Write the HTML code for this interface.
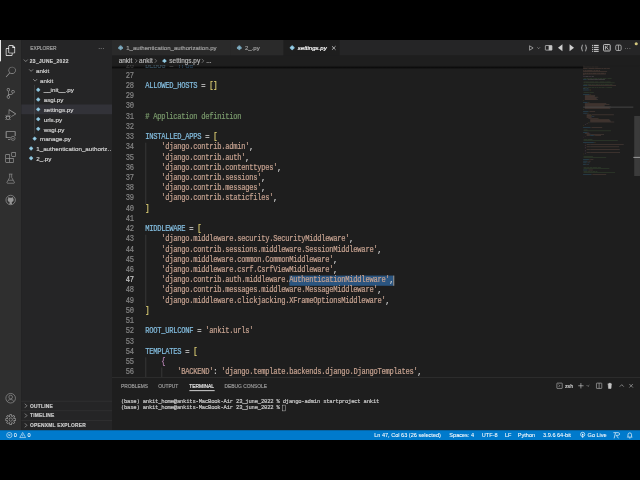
<!DOCTYPE html>
<html><head><meta charset="utf-8">
<style>

*{margin:0;padding:0;box-sizing:border-box}
html,body{width:640px;height:480px;background:#000;overflow:hidden}
#w{filter:blur(0.9px);-webkit-text-stroke-width:0.4px;position:absolute;left:0;top:40px;width:1440px;height:900px;transform:scale(0.444444);transform-origin:0 0;background:#1e1e1e;font-family:"Liberation Sans",sans-serif;overflow:hidden}
.a{position:absolute}
#act{left:0;top:0;width:48px;height:878px;background:#2f2f2f}
#side{left:48px;top:0;width:204px;height:878px;background:#252526}
#tabs{left:252px;top:0;width:1188px;height:35px;background:#252526}
.tab{position:absolute;top:0;height:35px;background:#2a2a2a;color:#a0a0a0;font-size:13.6px;line-height:36px;white-space:nowrap}
.tab.act{background:#1e1e1e;color:#ffffff;font-style:italic}.tab svg{opacity:.8}.tab.act svg{opacity:1}
#bc{left:252px;top:35px;width:1188px;height:22px;background:#1e1e1e;color:#b8b8b8;font-size:14.5px;line-height:22px;white-space:nowrap}
#code{left:252px;top:57px;width:1188px;height:702px;overflow:hidden;background:#1e1e1e}
.ln{position:absolute;left:0;width:49px;text-align:right;color:#858585;font-family:"Liberation Mono",monospace;font-size:16px;letter-spacing:-0.6px;height:23px;line-height:23px;transform:scaleY(1.15);transform-origin:0 15.8px}
.cl{position:absolute;left:75px;white-space:pre;color:#d4d4d4;font-family:"Liberation Mono",monospace;font-size:16px;letter-spacing:-0.6px;height:23px;line-height:23px;transform:scaleY(1.15);transform-origin:0 15.8px}
.v{color:#84bee0}.s{color:#c6a290}.c{color:#7a9a6c}.y{color:#dccd74}.p{color:#bb86b8}.k{color:#569cd6}
#panel{left:252px;top:759px;width:1188px;height:119px;background:#1e1e1e;border-top:1px solid #414141}
.pt{position:absolute;top:1px;height:35px;line-height:35px;font-size:11px;color:#9a9a9a;letter-spacing:0px}
.term{position:absolute;left:20px;white-space:pre;color:#cccccc;font-family:"Liberation Mono",monospace;font-size:12.5px;letter-spacing:-0.5px;line-height:14px;transform:scaleY(1.12);transform-origin:0 10.3px}
#status{left:0;top:878px;width:1440px;height:22px;background:#007acc;color:#fff;font-size:12.5px;line-height:22px;white-space:nowrap;-webkit-text-stroke-width:0.15px}
.row{position:absolute;left:0;width:204px;height:22px;line-height:24.5px;font-size:14px;color:#d2d2d2;white-space:nowrap}
.sec{position:absolute;left:0;width:204px;height:22px;line-height:22px;font-size:11px;font-weight:bold;color:#cccccc;border-top:1px solid #3c3c3c}
svg{position:absolute;overflow:visible}

</style></head><body>
<div id="w">
<div id="act" class="a"><div class="a" style="left:0;top:0;width:2px;height:48px;background:#ffffff"></div><svg class="a" style="left:12.0px;top:12.0px" width="24" height="24" viewBox="0 0 24 24" fill="#ffffff" fill-rule="evenodd"><path d="M17.5 0h-9L7 1.5V6H2.5L1 7.5v15.07L2.5 24h12.07L16 22.57V18h4.7l1.3-1.43V4.5L17.5 0zm0 2.12l2.38 2.38H17.5V2.12zm-3 20.38h-12v-15H7v9.07L8.5 18h6v4.5zm6-6h-12v-15H16V6h4.5v10.5z"/></svg><svg class="a" style="left:12.0px;top:60.0px" width="24" height="24" viewBox="0 0 24 24" fill="#969696" fill-rule="evenodd"><path d="M15.25 0a8.25 8.25 0 0 0-6.18 13.72L1 22.88l1.12 1 8.05-9.12A8.251 8.251 0 1 0 15.25.01V0zm0 15a6.75 6.75 0 1 1 0-13.5 6.75 6.75 0 0 1 0 13.5z"/></svg><svg class="a" style="left:12.0px;top:108.0px" width="24" height="24" viewBox="0 0 24 24" fill="#969696" fill-rule="evenodd"><path d="M21.007 8.222A3.738 3.738 0 0 0 15.045 5.2a3.737 3.737 0 0 0 1.156 6.583 2.988 2.988 0 0 1-2.668 1.67h-2.99a4.456 4.456 0 0 0-2.989 1.165V7.4a3.737 3.737 0 1 0-1.494 0v9.117a3.776 3.776 0 1 0 1.816.099 2.99 2.99 0 0 1 2.668-1.667h2.99a4.484 4.484 0 0 0 4.223-3.039 3.736 3.736 0 0 0 3.25-3.687zM4.565 3.738a2.242 2.242 0 1 1 4.484 0 2.242 2.242 0 0 1-4.484 0zm4.484 16.441a2.242 2.242 0 1 1-4.484 0 2.242 2.242 0 0 1 4.484 0zm8.221-9.715a2.242 2.242 0 1 1 0-4.485 2.242 2.242 0 0 1 0 4.485z"/></svg><svg class="a" style="left:12.0px;top:156.0px" width="24" height="24" viewBox="0 0 24 24" fill="#969696" fill-rule="evenodd"><path d="M10.94 13.5l-1.32 1.32a3.73 3.73 0 0 0-7.24 0L1.06 13.5 0 14.560l1.72 1.72-.22.22V18H0v1.5h1.5v.08c.077.489.214.966.41 1.42L0 22.94 1.06 24l1.65-1.65A4.308 4.308 0 0 0 6 24a4.310 4.310 0 0 0 3.29-1.65L10.94 24 12 22.94 10.09 21c.198-.464.336-.951.41-1.45v-.1H12V18h-1.5v-1.5l-.22-.22L12 14.56l-1.06-1.06zM6 13.5a2.25 2.25 0 0 1 2.25 2.25h-4.5A2.25 2.25 0 0 1 6 13.5zm3 6a3.33 3.33 0 0 1-3 3 3.33 3.33 0 0 1-3-3v-2.25h6v2.25zm14.76-9.9v1.26L13.5 17.37V15.6l8.5-5.37L9 2v9.46a5.07 5.07 0 0 0-1.5-.72V.63L8.64 0l15.12 9.6z"/></svg><svg class="a" style="left:12.0px;top:204.0px" width="24" height="24" viewBox="0 0 24 24" fill="#969696" fill-rule="evenodd"><path d="M1.5 1.5h21l.75.75V12H21V3H3v12h9v1.5H1.5l-.75-.75V2.25zM6 19.5h5.25V21H6z"/><circle cx="17.25" cy="17.25" r="4.6" fill="none" stroke="#969696" stroke-width="1.5"/><path d="M15.2 18.6l2-2 2 2" fill="none" stroke="#969696" stroke-width="1.3"/></svg><svg class="a" style="left:12.0px;top:252.0px" width="24" height="24" viewBox="0 0 24 24" fill="#969696" fill-rule="evenodd"><path d="M13.5 1.5L15 0h7.5L24 1.5V9l-1.5 1.5H15L13.5 9V1.5zm1.5 0V9h7.5V1.5H15zM0 15V6l1.5-1.5H9L10.5 6v7.5H18l1.5 1.5v7.5L18 24H1.5L0 22.5V15zm9-1.5V6H1.5v7.5H9zM9 15H1.5v7.5H9V15zm1.5 7.5H18V15h-7.5v7.5z"/></svg><svg class="a" style="left:12.0px;top:300.0px" width="24" height="24" viewBox="0 0 24 24" fill="#969696" fill-rule="evenodd"><path d="M8 1.75h8M9.75 1.75v7.5L3.6 20.4c-.5 1 .2 1.85 1.1 1.85h14.6c.9 0 1.6-.85 1.1-1.85L14.25 9.25v-7.5M6.5 15.5h11" fill="none" stroke="#969696" stroke-width="1.5" stroke-linejoin="round"/></svg><svg class="a" style="left:12.0px;top:348.0px" width="24" height="24" viewBox="0 0 24 24" fill="#969696" fill-rule="evenodd"><circle cx="12" cy="12" r="10.6" fill="none" stroke="#969696" stroke-width="1.6"/><path d="M9.3 21.5v-3.2c0-.8.2-1.3.6-1.7-2.4-.3-4.5-1.3-4.5-5 0-1.1.4-2 1.1-2.7-.1-.3-.4-1.4.1-2.8 0 0 .9-.3 2.9 1.1.85-.25 1.7-.35 2.55-.35s1.7.1 2.55.35c2-1.4 2.9-1.1 2.9-1.1.5 1.4.2 2.5.1 2.8.7.7 1.1 1.6 1.1 2.7 0 3.7-2.1 4.7-4.5 5 .4.4.6 1 .6 1.9v3z" fill="#969696"/></svg><svg class="a" style="left:12.0px;top:794.0px" width="24" height="24" viewBox="0 0 24 24" fill="#969696" fill-rule="evenodd"><circle cx="12" cy="12" r="10.8" fill="none" stroke="#969696" stroke-width="1.5"/><circle cx="12" cy="9.3" r="4.1" fill="none" stroke="#969696" stroke-width="1.5"/><path d="M4.8 19.6c1.4-3.2 4-4.6 7.2-4.6s5.8 1.4 7.2 4.6" fill="none" stroke="#969696" stroke-width="1.5"/></svg><svg class="a" style="left:12.0px;top:842.0px" width="24" height="24" viewBox="0 0 24 24" fill="#969696" fill-rule="evenodd"><path d="M19.85 8.75l4.15.83v4.84l-4.15.83 2.35 3.52-3.42 3.42-3.52-2.35-.83 4.16H9.58l-.83-4.15-3.52 2.35-3.42-3.42 2.35-3.52L0 14.42V9.58l4.15-.83L1.8 5.23 5.23 1.8l3.52 2.35L9.58 0h4.84l.83 4.15 3.52-2.35 3.42 3.42-2.35 3.53zm-1.57 5.07l4.22-.84v-1.96l-4.22-.84-.28-.72-.27-.71 2.38-3.58-1.39-1.39-3.58 2.38-.71-.27-.72-.28L12.98 1.5h-1.96l-.84 4.22-.72.28-.71.27-3.58-2.38-1.39 1.39 2.38 3.58-.27.71-.28.72-4.22.84v1.96l4.22.84.28.72.27.71-2.38 3.58 1.39 1.39 3.58-2.38.71.27.72.28.84 4.22h1.96l.84-4.22.72-.28.71-.27 3.58 2.38 1.39-1.39-2.38-3.58.27-.71.28-.72zM12 15a3 3 0 1 0 0-6 3 3 0 0 0 0 6zm0 1.5a4.5 4.5 0 1 0 0-9 4.5 4.5 0 0 0 0 9z"/></svg></div>
<div id="side" class="a"><div class="a" style="left:20px;top:1.5px;height:35px;line-height:35px;font-size:11px;color:#a0a0a0;letter-spacing:-0.1px">EXPLORER</div><div class="a" style="left:173px;top:1px;height:35px;line-height:35px;font-size:13px;color:#8a8a8a;letter-spacing:0.5px">&middot;&middot;&middot;</div><svg class="a" style="left:2px;top:38px" width="16" height="16" viewBox="0 0 16 16" fill="none" stroke="#c5c5c5" stroke-width="1.3"><path d="M3.5 6l4.5 4.5L12.5 6"/></svg><div class="row" style="top:35px;left:19px;font-size:11px;font-weight:bold;color:#cccccc;letter-spacing:0.8px">23_JUNE_2022</div><svg class="a" style="left:13.5px;top:60px" width="16" height="16" viewBox="0 0 16 16" fill="none" stroke="#c5c5c5" stroke-width="1.3"><path d="M3.5 6l4.5 4.5L12.5 6"/></svg><div class="row" style="top:57px;left:33px">ankit</div><svg class="a" style="left:22.5px;top:82px" width="16" height="16" viewBox="0 0 16 16" fill="none" stroke="#c5c5c5" stroke-width="1.3"><path d="M3.5 6l4.5 4.5L12.5 6"/></svg><div class="row" style="top:79px;left:42px">ankit</div><svg class="a" style="left:30.9px;top:105.0px" width="14.0" height="14.0" viewBox="0 0 14 14"><path d="M7 2.2Q7.4 2.2 7.8 2.6L11.4 6.2Q11.8 7 11.4 7.8L7.8 11.4Q7 11.8 6.2 11.4L2.6 7.8Q2.2 7 2.6 6.2L6.2 2.6Q6.6 2.2 7 2.2z" fill="#86bfd9"/><path d="M7 5.2L8.8 7 7 8.8 5.2 7z" fill="#d2ecf5" opacity="0.55"/></svg><div class="row" style="top:101px;left:50.3px">__init__.py</div><svg class="a" style="left:30.9px;top:127.0px" width="14.0" height="14.0" viewBox="0 0 14 14"><path d="M7 2.2Q7.4 2.2 7.8 2.6L11.4 6.2Q11.8 7 11.4 7.8L7.8 11.4Q7 11.8 6.2 11.4L2.6 7.8Q2.2 7 2.6 6.2L6.2 2.6Q6.6 2.2 7 2.2z" fill="#86bfd9"/><path d="M7 5.2L8.8 7 7 8.8 5.2 7z" fill="#d2ecf5" opacity="0.55"/></svg><div class="row" style="top:123px;left:50.3px">asgi.py</div><div class="a" style="left:0;top:145px;width:204px;height:22px;background:#323238"></div><svg class="a" style="left:30.9px;top:149.0px" width="14.0" height="14.0" viewBox="0 0 14 14"><path d="M7 2.2Q7.4 2.2 7.8 2.6L11.4 6.2Q11.8 7 11.4 7.8L7.8 11.4Q7 11.8 6.2 11.4L2.6 7.8Q2.2 7 2.6 6.2L6.2 2.6Q6.6 2.2 7 2.2z" fill="#86bfd9"/><path d="M7 5.2L8.8 7 7 8.8 5.2 7z" fill="#d2ecf5" opacity="0.55"/></svg><div class="row" style="top:145px;left:50.3px">settings.py</div><svg class="a" style="left:30.9px;top:171.0px" width="14.0" height="14.0" viewBox="0 0 14 14"><path d="M7 2.2Q7.4 2.2 7.8 2.6L11.4 6.2Q11.8 7 11.4 7.8L7.8 11.4Q7 11.8 6.2 11.4L2.6 7.8Q2.2 7 2.6 6.2L6.2 2.6Q6.6 2.2 7 2.2z" fill="#86bfd9"/><path d="M7 5.2L8.8 7 7 8.8 5.2 7z" fill="#d2ecf5" opacity="0.55"/></svg><div class="row" style="top:167px;left:50.3px">urls.py</div><svg class="a" style="left:30.9px;top:193.0px" width="14.0" height="14.0" viewBox="0 0 14 14"><path d="M7 2.2Q7.4 2.2 7.8 2.6L11.4 6.2Q11.8 7 11.4 7.8L7.8 11.4Q7 11.8 6.2 11.4L2.6 7.8Q2.2 7 2.6 6.2L6.2 2.6Q6.6 2.2 7 2.2z" fill="#86bfd9"/><path d="M7 5.2L8.8 7 7 8.8 5.2 7z" fill="#d2ecf5" opacity="0.55"/></svg><div class="row" style="top:189px;left:50.3px">wsgi.py</div><svg class="a" style="left:22.9px;top:215.0px" width="14.0" height="14.0" viewBox="0 0 14 14"><path d="M7 2.2Q7.4 2.2 7.8 2.6L11.4 6.2Q11.8 7 11.4 7.8L7.8 11.4Q7 11.8 6.2 11.4L2.6 7.8Q2.2 7 2.6 6.2L6.2 2.6Q6.6 2.2 7 2.2z" fill="#86bfd9"/><path d="M7 5.2L8.8 7 7 8.8 5.2 7z" fill="#d2ecf5" opacity="0.55"/></svg><div class="row" style="top:211px;left:41.9px">manage.py</div><svg class="a" style="left:14.899999999999999px;top:237.0px" width="14.0" height="14.0" viewBox="0 0 14 14"><path d="M7 2.2Q7.4 2.2 7.8 2.6L11.4 6.2Q11.8 7 11.4 7.8L7.8 11.4Q7 11.8 6.2 11.4L2.6 7.8Q2.2 7 2.6 6.2L6.2 2.6Q6.6 2.2 7 2.2z" fill="#86bfd9"/><path d="M7 5.2L8.8 7 7 8.8 5.2 7z" fill="#d2ecf5" opacity="0.55"/></svg><div class="row" style="top:233px;left:33.5px">1_authentication_authoriz…</div><svg class="a" style="left:14.899999999999999px;top:259.0px" width="14.0" height="14.0" viewBox="0 0 14 14"><path d="M7 2.2Q7.4 2.2 7.8 2.6L11.4 6.2Q11.8 7 11.4 7.8L7.8 11.4Q7 11.8 6.2 11.4L2.6 7.8Q2.2 7 2.6 6.2L6.2 2.6Q6.6 2.2 7 2.2z" fill="#86bfd9"/><path d="M7 5.2L8.8 7 7 8.8 5.2 7z" fill="#d2ecf5" opacity="0.55"/></svg><div class="row" style="top:255px;left:33.5px">2_.py</div><div class="a" style="left:29px;top:101px;width:1px;height:110px;background:#585858"></div><div class="sec" style="top:812px"></div><svg class="a" style="left:2px;top:815px" width="16" height="16" viewBox="0 0 16 16" fill="none" stroke="#c5c5c5" stroke-width="1.3"><path d="M6 3.5l4.5 4.5L6 12.5"/></svg><div class="a" style="left:19.5px;top:812px;height:22px;line-height:22px;font-size:11px;font-weight:bold;color:#cccccc;letter-spacing:0.5px">OUTLINE</div><div class="sec" style="top:834px"></div><svg class="a" style="left:2px;top:837px" width="16" height="16" viewBox="0 0 16 16" fill="none" stroke="#c5c5c5" stroke-width="1.3"><path d="M6 3.5l4.5 4.5L6 12.5"/></svg><div class="a" style="left:19.5px;top:834px;height:22px;line-height:22px;font-size:11px;font-weight:bold;color:#cccccc;letter-spacing:0.5px">TIMELINE</div><div class="sec" style="top:856px"></div><svg class="a" style="left:2px;top:859px" width="16" height="16" viewBox="0 0 16 16" fill="none" stroke="#c5c5c5" stroke-width="1.3"><path d="M6 3.5l4.5 4.5L6 12.5"/></svg><div class="a" style="left:19.5px;top:856px;height:22px;line-height:22px;font-size:11px;font-weight:bold;color:#cccccc;letter-spacing:0.5px">OPENXML EXPLORER</div></div>
<div id="tabs" class="a"><div class="tab" style="left:0px;width:267px"><svg class="a" style="left:10.6px;top:9.1px" width="16.8" height="16.8" viewBox="0 0 14 14"><path d="M7 2.2Q7.4 2.2 7.8 2.6L11.4 6.2Q11.8 7 11.4 7.8L7.8 11.4Q7 11.8 6.2 11.4L2.6 7.8Q2.2 7 2.6 6.2L6.2 2.6Q6.6 2.2 7 2.2z" fill="#86bfd9"/><path d="M7 5.2L8.8 7 7 8.8 5.2 7z" fill="#d2ecf5" opacity="0.55"/></svg><span class="a" style="left:32px;top:0">1_authentication_authorization.py</span></div><div class="tab" style="left:267px;width:119px"><svg class="a" style="left:10.6px;top:9.1px" width="16.8" height="16.8" viewBox="0 0 14 14"><path d="M7 2.2Q7.4 2.2 7.8 2.6L11.4 6.2Q11.8 7 11.4 7.8L7.8 11.4Q7 11.8 6.2 11.4L2.6 7.8Q2.2 7 2.6 6.2L6.2 2.6Q6.6 2.2 7 2.2z" fill="#86bfd9"/><path d="M7 5.2L8.8 7 7 8.8 5.2 7z" fill="#d2ecf5" opacity="0.55"/></svg><span class="a" style="left:32px;top:0">2_.py</span></div><div class="tab act" style="left:386px;width:126px"><svg class="a" style="left:10.6px;top:9.1px" width="16.8" height="16.8" viewBox="0 0 14 14"><path d="M7 2.2Q7.4 2.2 7.8 2.6L11.4 6.2Q11.8 7 11.4 7.8L7.8 11.4Q7 11.8 6.2 11.4L2.6 7.8Q2.2 7 2.6 6.2L6.2 2.6Q6.6 2.2 7 2.2z" fill="#86bfd9"/><path d="M7 5.2L8.8 7 7 8.8 5.2 7z" fill="#d2ecf5" opacity="0.55"/></svg><span class="a" style="left:32px;top:0">settings.py</span><svg class="a" style="left:105px;top:9.5px" width="16" height="16" viewBox="0 0 16 16" fill="none" stroke="#ffffff" stroke-width="1.4"><path d="M4 4l8 8M12 4l-8 8"/></svg></div><svg class="a" style="left:935.0px;top:9.5px" width="16" height="16" viewBox="0 0 16 16" fill="none" stroke="#c5c5c5" stroke-width="1.5" stroke-linejoin="round"><path d="M4.5 3l8 5-8 5z"/></svg><svg class="a" style="left:952.0px;top:9.5px" width="16" height="16" viewBox="0 0 16 16" fill="none" stroke="#c5c5c5" stroke-width="1.1" stroke-linejoin="round"><path d="M5 6.5l3 3 3-3"/></svg><svg class="a" style="left:974.0px;top:9.0px" width="17" height="17" viewBox="0 0 16 16" fill="none" stroke="#c5c5c5" stroke-width="1.4" stroke-linejoin="round"><rect x="1" y="3.2" width="14" height="9.8" rx="0.8" stroke-width="1.5"/><rect x="8" y="3.2" width="7" height="9.8" fill="#c5c5c5" stroke="none"/></svg><svg class="a" style="left:998.5px;top:8.0px" width="19" height="19" viewBox="0 0 16 16" fill="none" stroke="#c5c5c5" stroke-width="1.4" stroke-linejoin="round"><path d="M12.2 1.5v13L3.8 8z" fill="#d0d0d0" stroke="none"/></svg><svg class="a" style="left:1025.0px;top:8.0px" width="19" height="19" viewBox="0 0 16 16" fill="none" stroke="#c5c5c5" stroke-width="1.4" stroke-linejoin="round"><path d="M3.8 1.5v13L12.2 8z" fill="#d0d0d0" stroke="none"/></svg><svg class="a" style="left:1053.5px;top:9.5px" width="16" height="16" viewBox="0 0 16 16" fill="none" stroke="#c5c5c5" stroke-width="2.0" stroke-linejoin="round"><path d="M5.8 1.5c-2 0-2.3 1-2.3 2.5v2c0 1-.8 2-2 2 1.2 0 2 1 2 2v2c0 1.5.3 2.5 2.3 2.5M10.2 1.5c2 0 2.3 1 2.3 2.5v2c0 1 .8 2 2 2-1.2 0-2 1-2 2v2c0 1.5-.3 2.5-2.3 2.5"/></svg><div class="a" style="left:1079.5px;top:11.275px;width:2.6px;height:2.25px;background:#c8c8c8"></div><div class="a" style="left:1083.5px;top:11.275px;width:11px;height:2.25px;background:#c8c8c8"></div><div class="a" style="left:1079.5px;top:15.775px;width:2.6px;height:2.25px;background:#c8c8c8"></div><div class="a" style="left:1083.5px;top:15.775px;width:11px;height:2.25px;background:#c8c8c8"></div><div class="a" style="left:1079.5px;top:20.275px;width:2.6px;height:2.25px;background:#c8c8c8"></div><div class="a" style="left:1083.5px;top:20.275px;width:11px;height:2.25px;background:#c8c8c8"></div><div class="a" style="left:1079.5px;top:24.775px;width:2.6px;height:2.25px;background:#c8c8c8"></div><div class="a" style="left:1083.5px;top:24.775px;width:11px;height:2.25px;background:#c8c8c8"></div><svg class="a" style="left:1104.5px;top:9.0px" width="17" height="17" viewBox="0 0 16 16" fill="none" stroke="#c5c5c5" stroke-width="2.1" stroke-linejoin="round"><rect x="1" y="1.2" width="14" height="13.6" rx="1.5"/><path d="M5.2 4v8M5.4 8.3l4.6-4.3M7.2 6.6l3.8 5.4" stroke-width="1.8"/></svg><svg class="a" style="left:1131.5px;top:10.0px" width="15" height="15" viewBox="0 0 16 16" fill="none" stroke="#c5c5c5" stroke-width="1.8" stroke-linejoin="round"><rect x="1.5" y="1.5" width="13" height="13" rx="2.8"/><path d="M8 1.5v13"/></svg><div class="a" style="left:1153px;top:1px;height:35px;line-height:35px;font-size:12px;color:#808080;letter-spacing:1.2px">&middot;&middot;&middot;</div><div class="a" style="left:1175.75px;top:4.5px;width:7.5px;height:7.5px;border-radius:50%;background:#d3c77e"></div></div>
<div id="bc" class="a"><span class="a" style="left:15px;top:1px">ankit</span><svg class="a" style="left:46px;top:4px" width="16" height="16" viewBox="0 0 16 16" fill="none" stroke="#a0a0a0" stroke-width="1.3"><path d="M6 3.5l4.5 4.5L6 12.5"/></svg><span class="a" style="left:61px;top:1px">ankit</span><svg class="a" style="left:90px;top:4px" width="16" height="16" viewBox="0 0 16 16" fill="none" stroke="#a0a0a0" stroke-width="1.3"><path d="M6 3.5l4.5 4.5L6 12.5"/></svg><svg class="a" style="left:111.0px;top:5.0px" width="14.0" height="14.0" viewBox="0 0 14 14"><path d="M7 2.2Q7.4 2.2 7.8 2.6L11.4 6.2Q11.8 7 11.4 7.8L7.8 11.4Q7 11.8 6.2 11.4L2.6 7.8Q2.2 7 2.6 6.2L6.2 2.6Q6.6 2.2 7 2.2z" fill="#86bfd9"/><path d="M7 5.2L8.8 7 7 8.8 5.2 7z" fill="#d2ecf5" opacity="0.55"/></svg><span class="a" style="left:129px;top:1px">settings.py</span><svg class="a" style="left:195.5px;top:4px" width="16" height="16" viewBox="0 0 16 16" fill="none" stroke="#a0a0a0" stroke-width="1.3"><path d="M6 3.5l4.5 4.5L6 12.5"/></svg><span class="a" style="left:212px;top:1px">...</span></div>
<div id="code" class="a"><div class="a" style="left:399.0px;top:472.70000000000005px;width:234.0px;height:23px;background:#2b5580"></div><div class="a" style="left:74.5px;top:173.7px;width:2px;height:138px;background:#3a3a3a"></div><div class="a" style="left:74.5px;top:380.7px;width:2px;height:161px;background:#3a3a3a"></div><div class="a" style="left:74.5px;top:656.7px;width:2px;height:69px;background:#3a3a3a"></div><div class="a" style="left:110.5px;top:679.7px;width:2px;height:46px;background:#3a3a3a"></div><div class="ln" style="top:-10.299999999999997px;color:#858585">26</div><div class="cl" style="top:-10.299999999999997px"><span class="v">DEBUG</span> = <span class="k">True</span></div><div class="ln" style="top:12.700000000000003px;color:#858585">27</div><div class="cl" style="top:12.700000000000003px"></div><div class="ln" style="top:35.7px;color:#858585">28</div><div class="cl" style="top:35.7px"><span class="v">ALLOWED_HOSTS</span> = <span class="y">[]</span></div><div class="ln" style="top:58.7px;color:#858585">29</div><div class="cl" style="top:58.7px"></div><div class="ln" style="top:81.69999999999999px;color:#858585">30</div><div class="cl" style="top:81.69999999999999px"></div><div class="ln" style="top:104.69999999999999px;color:#858585">31</div><div class="cl" style="top:104.69999999999999px"><span class="c"># Application definition</span></div><div class="ln" style="top:127.69999999999999px;color:#858585">32</div><div class="cl" style="top:127.69999999999999px"></div><div class="ln" style="top:150.7px;color:#858585">33</div><div class="cl" style="top:150.7px"><span class="v">INSTALLED_APPS</span> = <span class="y">[</span></div><div class="ln" style="top:173.7px;color:#858585">34</div><div class="cl" style="top:173.7px">    <span class="s">'django.contrib.admin'</span>,</div><div class="ln" style="top:196.7px;color:#858585">35</div><div class="cl" style="top:196.7px">    <span class="s">'django.contrib.auth'</span>,</div><div class="ln" style="top:219.7px;color:#858585">36</div><div class="cl" style="top:219.7px">    <span class="s">'django.contrib.contenttypes'</span>,</div><div class="ln" style="top:242.7px;color:#858585">37</div><div class="cl" style="top:242.7px">    <span class="s">'django.contrib.sessions'</span>,</div><div class="ln" style="top:265.7px;color:#858585">38</div><div class="cl" style="top:265.7px">    <span class="s">'django.contrib.messages'</span>,</div><div class="ln" style="top:288.7px;color:#858585">39</div><div class="cl" style="top:288.7px">    <span class="s">'django.contrib.staticfiles'</span>,</div><div class="ln" style="top:311.7px;color:#858585">40</div><div class="cl" style="top:311.7px"><span class="y">]</span></div><div class="ln" style="top:334.7px;color:#858585">41</div><div class="cl" style="top:334.7px"></div><div class="ln" style="top:357.7px;color:#858585">42</div><div class="cl" style="top:357.7px"><span class="v">MIDDLEWARE</span> = <span class="y">[</span></div><div class="ln" style="top:380.7px;color:#858585">43</div><div class="cl" style="top:380.7px">    <span class="s">'django.middleware.security.SecurityMiddleware'</span>,</div><div class="ln" style="top:403.7px;color:#858585">44</div><div class="cl" style="top:403.7px">    <span class="s">'django.contrib.sessions.middleware.SessionMiddleware'</span>,</div><div class="ln" style="top:426.7px;color:#858585">45</div><div class="cl" style="top:426.7px">    <span class="s">'django.middleware.common.CommonMiddleware'</span>,</div><div class="ln" style="top:449.7px;color:#858585">46</div><div class="cl" style="top:449.7px">    <span class="s">'django.middleware.csrf.CsrfViewMiddleware'</span>,</div><div class="ln" style="top:472.70000000000005px;color:#c6c6c6">47</div><div class="cl" style="top:472.70000000000005px">    <span class="s">'django.contrib.auth.middleware.AuthenticationMiddleware'</span>,</div><div class="ln" style="top:495.70000000000005px;color:#858585">48</div><div class="cl" style="top:495.70000000000005px">    <span class="s">'django.contrib.messages.middleware.MessageMiddleware'</span>,</div><div class="ln" style="top:518.7px;color:#858585">49</div><div class="cl" style="top:518.7px">    <span class="s">'django.middleware.clickjacking.XFrameOptionsMiddleware'</span>,</div><div class="ln" style="top:541.7px;color:#858585">50</div><div class="cl" style="top:541.7px"><span class="y">]</span></div><div class="ln" style="top:564.7px;color:#858585">51</div><div class="cl" style="top:564.7px"></div><div class="ln" style="top:587.7px;color:#858585">52</div><div class="cl" style="top:587.7px"><span class="v">ROOT_URLCONF</span> = <span class="s">'ankit.urls'</span></div><div class="ln" style="top:610.7px;color:#858585">53</div><div class="cl" style="top:610.7px"></div><div class="ln" style="top:633.7px;color:#858585">54</div><div class="cl" style="top:633.7px"><span class="v">TEMPLATES</span> = <span class="y">[</span></div><div class="ln" style="top:656.7px;color:#858585">55</div><div class="cl" style="top:656.7px">    <span class="p">{</span></div><div class="ln" style="top:679.7px;color:#858585">56</div><div class="cl" style="top:679.7px">        <span class="s">'BACKEND'</span>: <span class="s">'django.template.backends.django.DjangoTemplates'</span>,</div><div class="ln" style="top:702.7px;color:#858585">57</div><div class="cl" style="top:702.7px">        <span class="s">'DIRS'</span>: <span class="y">[]</span>,</div><div class="a" style="left:633.0px;top:472.70000000000005px;width:2px;height:23px;background:#aeafad"></div><div class="a" style="left:0;top:0;width:1188px;height:702px;opacity:0.38"><div class="a" style="left:1060px;top:1px;width:3px;height:1.3px;background:#ce9178"></div><div class="a" style="left:1060px;top:3px;width:6px;height:1.3px;background:#ce9178"></div><div class="a" style="left:1067px;top:3px;width:8px;height:1.3px;background:#ce9178"></div><div class="a" style="left:1076px;top:3px;width:3px;height:1.3px;background:#ce9178"></div><div class="a" style="left:1080px;top:3px;width:5px;height:1.3px;background:#ce9178"></div><div class="a" style="left:1086px;top:3px;width:8px;height:1.3px;background:#ce9178"></div><div class="a" style="left:1060px;top:7px;width:9px;height:1.3px;background:#ce9178"></div><div class="a" style="left:1070px;top:7px;width:2px;height:1.3px;background:#ce9178"></div><div class="a" style="left:1073px;top:7px;width:13px;height:1.3px;background:#ce9178"></div><div class="a" style="left:1087px;top:7px;width:13px;height:1.3px;background:#ce9178"></div><div class="a" style="left:1101px;top:7px;width:5px;height:1.3px;background:#ce9178"></div><div class="a" style="left:1107px;top:7px;width:6px;height:1.3px;background:#ce9178"></div><div class="a" style="left:1114px;top:7px;width:6px;height:1.3px;background:#ce9178"></div><div class="a" style="left:1060px;top:11px;width:3px;height:1.3px;background:#ce9178"></div><div class="a" style="left:1064px;top:11px;width:4px;height:1.3px;background:#ce9178"></div><div class="a" style="left:1069px;top:11px;width:11px;height:1.3px;background:#ce9178"></div><div class="a" style="left:1081px;top:11px;width:2px;height:1.3px;background:#ce9178"></div><div class="a" style="left:1084px;top:11px;width:4px;height:1.3px;background:#ce9178"></div><div class="a" style="left:1089px;top:11px;width:5px;height:1.3px;background:#ce9178"></div><div class="a" style="left:1095px;top:11px;width:3px;height:1.3px;background:#ce9178"></div><div class="a" style="left:1060px;top:13px;width:54px;height:1.3px;background:#ce9178"></div><div class="a" style="left:1060px;top:17px;width:3px;height:1.3px;background:#ce9178"></div><div class="a" style="left:1064px;top:17px;width:3px;height:1.3px;background:#ce9178"></div><div class="a" style="left:1068px;top:17px;width:4px;height:1.3px;background:#ce9178"></div><div class="a" style="left:1073px;top:17px;width:4px;height:1.3px;background:#ce9178"></div><div class="a" style="left:1078px;top:17px;width:2px;height:1.3px;background:#ce9178"></div><div class="a" style="left:1081px;top:17px;width:8px;height:1.3px;background:#ce9178"></div><div class="a" style="left:1090px;top:17px;width:3px;height:1.3px;background:#ce9178"></div><div class="a" style="left:1094px;top:17px;width:5px;height:1.3px;background:#ce9178"></div><div class="a" style="left:1100px;top:17px;width:7px;height:1.3px;background:#ce9178"></div><div class="a" style="left:1108px;top:17px;width:3px;height:1.3px;background:#ce9178"></div><div class="a" style="left:1060px;top:19px;width:51px;height:1.3px;background:#ce9178"></div><div class="a" style="left:1060px;top:21px;width:3px;height:1.3px;background:#ce9178"></div><div class="a" style="left:1060px;top:25px;width:4px;height:1.3px;background:#c586c0"></div><div class="a" style="left:1065px;top:25px;width:7px;height:1.3px;background:#d4d4d4"></div><div class="a" style="left:1073px;top:25px;width:6px;height:1.3px;background:#c586c0"></div><div class="a" style="left:1080px;top:25px;width:4px;height:1.3px;background:#d4d4d4"></div><div class="a" style="left:1060px;top:29px;width:1px;height:1.3px;background:#6a9955"></div><div class="a" style="left:1062px;top:29px;width:5px;height:1.3px;background:#6a9955"></div><div class="a" style="left:1068px;top:29px;width:5px;height:1.3px;background:#6a9955"></div><div class="a" style="left:1074px;top:29px;width:6px;height:1.3px;background:#6a9955"></div><div class="a" style="left:1081px;top:29px;width:3px;height:1.3px;background:#6a9955"></div><div class="a" style="left:1085px;top:29px;width:7px;height:1.3px;background:#6a9955"></div><div class="a" style="left:1093px;top:29px;width:4px;height:1.3px;background:#6a9955"></div><div class="a" style="left:1098px;top:29px;width:5px;height:1.3px;background:#6a9955"></div><div class="a" style="left:1104px;top:29px;width:8px;height:1.3px;background:#6a9955"></div><div class="a" style="left:1113px;top:29px;width:1px;height:1.3px;background:#6a9955"></div><div class="a" style="left:1115px;top:29px;width:9px;height:1.3px;background:#6a9955"></div><div class="a" style="left:1060px;top:31px;width:8px;height:1.3px;background:#4fc1ff"></div><div class="a" style="left:1069px;top:31px;width:1px;height:1.3px;background:#d4d4d4"></div><div class="a" style="left:1071px;top:31px;width:4px;height:1.3px;background:#d4d4d4"></div><div class="a" style="left:1075px;top:31px;width:1px;height:1.3px;background:#da70d6"></div><div class="a" style="left:1076px;top:31px;width:8px;height:1.3px;background:#d4d4d4"></div><div class="a" style="left:1084px;top:31px;width:1px;height:1.3px;background:#da70d6"></div><div class="a" style="left:1085px;top:31px;width:1px;height:1.3px;background:#d4d4d4"></div><div class="a" style="left:1086px;top:31px;width:7px;height:1.3px;background:#d4d4d4"></div><div class="a" style="left:1093px;top:31px;width:1px;height:1.3px;background:#da70d6"></div><div class="a" style="left:1094px;top:31px;width:1px;height:1.3px;background:#da70d6"></div><div class="a" style="left:1095px;top:31px;width:1px;height:1.3px;background:#d4d4d4"></div><div class="a" style="left:1096px;top:31px;width:6px;height:1.3px;background:#d4d4d4"></div><div class="a" style="left:1102px;top:31px;width:1px;height:1.3px;background:#d4d4d4"></div><div class="a" style="left:1103px;top:31px;width:6px;height:1.3px;background:#d4d4d4"></div><div class="a" style="left:1060px;top:37px;width:1px;height:1.3px;background:#6a9955"></div><div class="a" style="left:1062px;top:37px;width:11px;height:1.3px;background:#6a9955"></div><div class="a" style="left:1074px;top:37px;width:11px;height:1.3px;background:#6a9955"></div><div class="a" style="left:1086px;top:37px;width:8px;height:1.3px;background:#6a9955"></div><div class="a" style="left:1095px;top:37px;width:1px;height:1.3px;background:#6a9955"></div><div class="a" style="left:1097px;top:37px;width:10px;height:1.3px;background:#6a9955"></div><div class="a" style="left:1108px;top:37px;width:3px;height:1.3px;background:#6a9955"></div><div class="a" style="left:1112px;top:37px;width:10px;height:1.3px;background:#6a9955"></div><div class="a" style="left:1060px;top:39px;width:1px;height:1.3px;background:#6a9955"></div><div class="a" style="left:1062px;top:39px;width:3px;height:1.3px;background:#6a9955"></div><div class="a" style="left:1066px;top:39px;width:65px;height:1.3px;background:#6a9955"></div><div class="a" style="left:1060px;top:43px;width:1px;height:1.3px;background:#6a9955"></div><div class="a" style="left:1062px;top:43px;width:8px;height:1.3px;background:#6a9955"></div><div class="a" style="left:1071px;top:43px;width:8px;height:1.3px;background:#6a9955"></div><div class="a" style="left:1080px;top:43px;width:4px;height:1.3px;background:#6a9955"></div><div class="a" style="left:1085px;top:43px;width:3px;height:1.3px;background:#6a9955"></div><div class="a" style="left:1089px;top:43px;width:6px;height:1.3px;background:#6a9955"></div><div class="a" style="left:1096px;top:43px;width:3px;height:1.3px;background:#6a9955"></div><div class="a" style="left:1100px;top:43px;width:4px;height:1.3px;background:#6a9955"></div><div class="a" style="left:1105px;top:43px;width:2px;height:1.3px;background:#6a9955"></div><div class="a" style="left:1108px;top:43px;width:10px;height:1.3px;background:#6a9955"></div><div class="a" style="left:1119px;top:43px;width:7px;height:1.3px;background:#6a9955"></div><div class="a" style="left:1060px;top:45px;width:10px;height:1.3px;background:#4fc1ff"></div><div class="a" style="left:1071px;top:45px;width:1px;height:1.3px;background:#d4d4d4"></div><div class="a" style="left:1073px;top:45px;width:61px;height:1.3px;background:#ce9178"></div><div class="a" style="left:1060px;top:49px;width:1px;height:1.3px;background:#6a9955"></div><div class="a" style="left:1062px;top:49px;width:8px;height:1.3px;background:#6a9955"></div><div class="a" style="left:1071px;top:49px;width:8px;height:1.3px;background:#6a9955"></div><div class="a" style="left:1080px;top:49px;width:5px;height:1.3px;background:#6a9955"></div><div class="a" style="left:1086px;top:49px;width:3px;height:1.3px;background:#6a9955"></div><div class="a" style="left:1090px;top:49px;width:4px;height:1.3px;background:#6a9955"></div><div class="a" style="left:1095px;top:49px;width:5px;height:1.3px;background:#6a9955"></div><div class="a" style="left:1101px;top:49px;width:6px;height:1.3px;background:#6a9955"></div><div class="a" style="left:1108px;top:49px;width:2px;height:1.3px;background:#6a9955"></div><div class="a" style="left:1111px;top:49px;width:2px;height:1.3px;background:#6a9955"></div><div class="a" style="left:1114px;top:49px;width:11px;height:1.3px;background:#6a9955"></div><div class="a" style="left:1060px;top:51px;width:5px;height:1.3px;background:#4fc1ff"></div><div class="a" style="left:1066px;top:51px;width:1px;height:1.3px;background:#d4d4d4"></div><div class="a" style="left:1068px;top:51px;width:4px;height:1.3px;background:#569cd6"></div><div class="a" style="left:1060px;top:55px;width:13px;height:1.3px;background:#4fc1ff"></div><div class="a" style="left:1074px;top:55px;width:1px;height:1.3px;background:#d4d4d4"></div><div class="a" style="left:1076px;top:55px;width:1px;height:1.3px;background:#ffd700"></div><div class="a" style="left:1077px;top:55px;width:1px;height:1.3px;background:#ffd700"></div><div class="a" style="left:1060px;top:61px;width:1px;height:1.3px;background:#6a9955"></div><div class="a" style="left:1062px;top:61px;width:11px;height:1.3px;background:#6a9955"></div><div class="a" style="left:1074px;top:61px;width:10px;height:1.3px;background:#6a9955"></div><div class="a" style="left:1060px;top:65px;width:14px;height:1.3px;background:#4fc1ff"></div><div class="a" style="left:1075px;top:65px;width:1px;height:1.3px;background:#d4d4d4"></div><div class="a" style="left:1077px;top:65px;width:1px;height:1.3px;background:#ffd700"></div><div class="a" style="left:1064px;top:67px;width:22px;height:1.3px;background:#ce9178"></div><div class="a" style="left:1086px;top:67px;width:1px;height:1.3px;background:#d4d4d4"></div><div class="a" style="left:1064px;top:69px;width:21px;height:1.3px;background:#ce9178"></div><div class="a" style="left:1085px;top:69px;width:1px;height:1.3px;background:#d4d4d4"></div><div class="a" style="left:1064px;top:71px;width:29px;height:1.3px;background:#ce9178"></div><div class="a" style="left:1093px;top:71px;width:1px;height:1.3px;background:#d4d4d4"></div><div class="a" style="left:1064px;top:73px;width:25px;height:1.3px;background:#ce9178"></div><div class="a" style="left:1089px;top:73px;width:1px;height:1.3px;background:#d4d4d4"></div><div class="a" style="left:1064px;top:75px;width:25px;height:1.3px;background:#ce9178"></div><div class="a" style="left:1089px;top:75px;width:1px;height:1.3px;background:#d4d4d4"></div><div class="a" style="left:1064px;top:77px;width:28px;height:1.3px;background:#ce9178"></div><div class="a" style="left:1092px;top:77px;width:1px;height:1.3px;background:#d4d4d4"></div><div class="a" style="left:1060px;top:79px;width:1px;height:1.3px;background:#ffd700"></div><div class="a" style="left:1060px;top:83px;width:10px;height:1.3px;background:#4fc1ff"></div><div class="a" style="left:1071px;top:83px;width:1px;height:1.3px;background:#d4d4d4"></div><div class="a" style="left:1073px;top:83px;width:1px;height:1.3px;background:#ffd700"></div><div class="a" style="left:1064px;top:85px;width:47px;height:1.3px;background:#ce9178"></div><div class="a" style="left:1111px;top:85px;width:1px;height:1.3px;background:#d4d4d4"></div><div class="a" style="left:1064px;top:87px;width:54px;height:1.3px;background:#ce9178"></div><div class="a" style="left:1118px;top:87px;width:1px;height:1.3px;background:#d4d4d4"></div><div class="a" style="left:1064px;top:89px;width:43px;height:1.3px;background:#ce9178"></div><div class="a" style="left:1107px;top:89px;width:1px;height:1.3px;background:#d4d4d4"></div><div class="a" style="left:1064px;top:91px;width:43px;height:1.3px;background:#ce9178"></div><div class="a" style="left:1107px;top:91px;width:1px;height:1.3px;background:#d4d4d4"></div><div class="a" style="left:1064px;top:93px;width:57px;height:1.3px;background:#ce9178"></div><div class="a" style="left:1121px;top:93px;width:1px;height:1.3px;background:#d4d4d4"></div><div class="a" style="left:1064px;top:95px;width:54px;height:1.3px;background:#ce9178"></div><div class="a" style="left:1118px;top:95px;width:1px;height:1.3px;background:#d4d4d4"></div><div class="a" style="left:1064px;top:97px;width:56px;height:1.3px;background:#ce9178"></div><div class="a" style="left:1120px;top:97px;width:1px;height:1.3px;background:#d4d4d4"></div><div class="a" style="left:1060px;top:99px;width:1px;height:1.3px;background:#ffd700"></div><div class="a" style="left:1060px;top:103px;width:12px;height:1.3px;background:#4fc1ff"></div><div class="a" style="left:1073px;top:103px;width:1px;height:1.3px;background:#d4d4d4"></div><div class="a" style="left:1075px;top:103px;width:12px;height:1.3px;background:#ce9178"></div><div class="a" style="left:1060px;top:107px;width:9px;height:1.3px;background:#4fc1ff"></div><div class="a" style="left:1070px;top:107px;width:1px;height:1.3px;background:#d4d4d4"></div><div class="a" style="left:1072px;top:107px;width:1px;height:1.3px;background:#ffd700"></div><div class="a" style="left:1064px;top:109px;width:1px;height:1.3px;background:#da70d6"></div><div class="a" style="left:1068px;top:111px;width:9px;height:1.3px;background:#ce9178"></div><div class="a" style="left:1077px;top:111px;width:1px;height:1.3px;background:#d4d4d4"></div><div class="a" style="left:1079px;top:111px;width:49px;height:1.3px;background:#ce9178"></div><div class="a" style="left:1128px;top:111px;width:1px;height:1.3px;background:#d4d4d4"></div><div class="a" style="left:1068px;top:113px;width:6px;height:1.3px;background:#ce9178"></div><div class="a" style="left:1074px;top:113px;width:1px;height:1.3px;background:#d4d4d4"></div><div class="a" style="left:1076px;top:113px;width:1px;height:1.3px;background:#ffd700"></div><div class="a" style="left:1077px;top:113px;width:1px;height:1.3px;background:#ffd700"></div><div class="a" style="left:1078px;top:113px;width:1px;height:1.3px;background:#d4d4d4"></div><div class="a" style="left:1068px;top:115px;width:10px;height:1.3px;background:#ce9178"></div><div class="a" style="left:1078px;top:115px;width:1px;height:1.3px;background:#d4d4d4"></div><div class="a" style="left:1080px;top:115px;width:4px;height:1.3px;background:#569cd6"></div><div class="a" style="left:1084px;top:115px;width:1px;height:1.3px;background:#d4d4d4"></div><div class="a" style="left:1068px;top:117px;width:9px;height:1.3px;background:#ce9178"></div><div class="a" style="left:1077px;top:117px;width:1px;height:1.3px;background:#d4d4d4"></div><div class="a" style="left:1079px;top:117px;width:1px;height:1.3px;background:#da70d6"></div><div class="a" style="left:1072px;top:119px;width:20px;height:1.3px;background:#ce9178"></div><div class="a" style="left:1092px;top:119px;width:1px;height:1.3px;background:#d4d4d4"></div><div class="a" style="left:1094px;top:119px;width:1px;height:1.3px;background:#ffd700"></div><div class="a" style="left:1076px;top:121px;width:42px;height:1.3px;background:#ce9178"></div><div class="a" style="left:1118px;top:121px;width:1px;height:1.3px;background:#d4d4d4"></div><div class="a" style="left:1076px;top:123px;width:44px;height:1.3px;background:#ce9178"></div><div class="a" style="left:1120px;top:123px;width:1px;height:1.3px;background:#d4d4d4"></div><div class="a" style="left:1076px;top:125px;width:45px;height:1.3px;background:#ce9178"></div><div class="a" style="left:1121px;top:125px;width:1px;height:1.3px;background:#d4d4d4"></div><div class="a" style="left:1076px;top:127px;width:53px;height:1.3px;background:#ce9178"></div><div class="a" style="left:1129px;top:127px;width:1px;height:1.3px;background:#d4d4d4"></div><div class="a" style="left:1072px;top:129px;width:1px;height:1.3px;background:#ffd700"></div><div class="a" style="left:1073px;top:129px;width:1px;height:1.3px;background:#d4d4d4"></div><div class="a" style="left:1068px;top:131px;width:1px;height:1.3px;background:#da70d6"></div><div class="a" style="left:1069px;top:131px;width:1px;height:1.3px;background:#d4d4d4"></div><div class="a" style="left:1064px;top:133px;width:1px;height:1.3px;background:#da70d6"></div><div class="a" style="left:1065px;top:133px;width:1px;height:1.3px;background:#d4d4d4"></div><div class="a" style="left:1060px;top:135px;width:1px;height:1.3px;background:#ffd700"></div><div class="a" style="left:1060px;top:139px;width:16px;height:1.3px;background:#4fc1ff"></div><div class="a" style="left:1077px;top:139px;width:1px;height:1.3px;background:#d4d4d4"></div><div class="a" style="left:1079px;top:139px;width:24px;height:1.3px;background:#ce9178"></div><div class="a" style="left:1060px;top:145px;width:1px;height:1.3px;background:#6a9955"></div><div class="a" style="left:1062px;top:145px;width:8px;height:1.3px;background:#6a9955"></div><div class="a" style="left:1060px;top:147px;width:1px;height:1.3px;background:#6a9955"></div><div class="a" style="left:1062px;top:147px;width:61px;height:1.3px;background:#6a9955"></div><div class="a" style="left:1060px;top:151px;width:9px;height:1.3px;background:#4fc1ff"></div><div class="a" style="left:1070px;top:151px;width:1px;height:1.3px;background:#d4d4d4"></div><div class="a" style="left:1072px;top:151px;width:1px;height:1.3px;background:#da70d6"></div><div class="a" style="left:1064px;top:153px;width:9px;height:1.3px;background:#ce9178"></div><div class="a" style="left:1073px;top:153px;width:1px;height:1.3px;background:#d4d4d4"></div><div class="a" style="left:1075px;top:153px;width:1px;height:1.3px;background:#da70d6"></div><div class="a" style="left:1068px;top:155px;width:8px;height:1.3px;background:#ce9178"></div><div class="a" style="left:1076px;top:155px;width:1px;height:1.3px;background:#d4d4d4"></div><div class="a" style="left:1078px;top:155px;width:28px;height:1.3px;background:#ce9178"></div><div class="a" style="left:1106px;top:155px;width:1px;height:1.3px;background:#d4d4d4"></div><div class="a" style="left:1068px;top:157px;width:6px;height:1.3px;background:#ce9178"></div><div class="a" style="left:1074px;top:157px;width:1px;height:1.3px;background:#d4d4d4"></div><div class="a" style="left:1076px;top:157px;width:8px;height:1.3px;background:#4fc1ff"></div><div class="a" style="left:1085px;top:157px;width:1px;height:1.3px;background:#d4d4d4"></div><div class="a" style="left:1087px;top:157px;width:12px;height:1.3px;background:#ce9178"></div><div class="a" style="left:1099px;top:157px;width:1px;height:1.3px;background:#d4d4d4"></div><div class="a" style="left:1064px;top:159px;width:1px;height:1.3px;background:#da70d6"></div><div class="a" style="left:1060px;top:161px;width:1px;height:1.3px;background:#da70d6"></div><div class="a" style="left:1060px;top:167px;width:1px;height:1.3px;background:#6a9955"></div><div class="a" style="left:1062px;top:167px;width:8px;height:1.3px;background:#6a9955"></div><div class="a" style="left:1071px;top:167px;width:10px;height:1.3px;background:#6a9955"></div><div class="a" style="left:1060px;top:169px;width:1px;height:1.3px;background:#6a9955"></div><div class="a" style="left:1062px;top:169px;width:76px;height:1.3px;background:#6a9955"></div><div class="a" style="left:1060px;top:173px;width:24px;height:1.3px;background:#4fc1ff"></div><div class="a" style="left:1085px;top:173px;width:1px;height:1.3px;background:#d4d4d4"></div><div class="a" style="left:1087px;top:173px;width:1px;height:1.3px;background:#ffd700"></div><div class="a" style="left:1064px;top:175px;width:1px;height:1.3px;background:#da70d6"></div><div class="a" style="left:1068px;top:177px;width:6px;height:1.3px;background:#ce9178"></div><div class="a" style="left:1074px;top:177px;width:1px;height:1.3px;background:#d4d4d4"></div><div class="a" style="left:1076px;top:177px;width:74px;height:1.3px;background:#ce9178"></div><div class="a" style="left:1150px;top:177px;width:1px;height:1.3px;background:#d4d4d4"></div><div class="a" style="left:1064px;top:179px;width:1px;height:1.3px;background:#da70d6"></div><div class="a" style="left:1065px;top:179px;width:1px;height:1.3px;background:#d4d4d4"></div><div class="a" style="left:1064px;top:181px;width:1px;height:1.3px;background:#da70d6"></div><div class="a" style="left:1068px;top:183px;width:6px;height:1.3px;background:#ce9178"></div><div class="a" style="left:1074px;top:183px;width:1px;height:1.3px;background:#d4d4d4"></div><div class="a" style="left:1076px;top:183px;width:64px;height:1.3px;background:#ce9178"></div><div class="a" style="left:1140px;top:183px;width:1px;height:1.3px;background:#d4d4d4"></div><div class="a" style="left:1064px;top:185px;width:1px;height:1.3px;background:#da70d6"></div><div class="a" style="left:1065px;top:185px;width:1px;height:1.3px;background:#d4d4d4"></div><div class="a" style="left:1064px;top:187px;width:1px;height:1.3px;background:#da70d6"></div><div class="a" style="left:1068px;top:189px;width:6px;height:1.3px;background:#ce9178"></div><div class="a" style="left:1074px;top:189px;width:1px;height:1.3px;background:#d4d4d4"></div><div class="a" style="left:1076px;top:189px;width:65px;height:1.3px;background:#ce9178"></div><div class="a" style="left:1141px;top:189px;width:1px;height:1.3px;background:#d4d4d4"></div><div class="a" style="left:1064px;top:191px;width:1px;height:1.3px;background:#da70d6"></div><div class="a" style="left:1065px;top:191px;width:1px;height:1.3px;background:#d4d4d4"></div><div class="a" style="left:1064px;top:193px;width:1px;height:1.3px;background:#da70d6"></div><div class="a" style="left:1068px;top:195px;width:6px;height:1.3px;background:#ce9178"></div><div class="a" style="left:1074px;top:195px;width:1px;height:1.3px;background:#d4d4d4"></div><div class="a" style="left:1076px;top:195px;width:66px;height:1.3px;background:#ce9178"></div><div class="a" style="left:1142px;top:195px;width:1px;height:1.3px;background:#d4d4d4"></div><div class="a" style="left:1064px;top:197px;width:1px;height:1.3px;background:#da70d6"></div><div class="a" style="left:1065px;top:197px;width:1px;height:1.3px;background:#d4d4d4"></div><div class="a" style="left:1060px;top:199px;width:1px;height:1.3px;background:#ffd700"></div><div class="a" style="left:1060px;top:205px;width:1px;height:1.3px;background:#6a9955"></div><div class="a" style="left:1062px;top:205px;width:20px;height:1.3px;background:#6a9955"></div><div class="a" style="left:1060px;top:207px;width:1px;height:1.3px;background:#6a9955"></div><div class="a" style="left:1062px;top:207px;width:50px;height:1.3px;background:#6a9955"></div><div class="a" style="left:1060px;top:211px;width:13px;height:1.3px;background:#4fc1ff"></div><div class="a" style="left:1074px;top:211px;width:1px;height:1.3px;background:#d4d4d4"></div><div class="a" style="left:1076px;top:211px;width:7px;height:1.3px;background:#ce9178"></div><div class="a" style="left:1060px;top:215px;width:9px;height:1.3px;background:#4fc1ff"></div><div class="a" style="left:1070px;top:215px;width:1px;height:1.3px;background:#d4d4d4"></div><div class="a" style="left:1072px;top:215px;width:5px;height:1.3px;background:#ce9178"></div><div class="a" style="left:1060px;top:219px;width:8px;height:1.3px;background:#4fc1ff"></div><div class="a" style="left:1069px;top:219px;width:1px;height:1.3px;background:#d4d4d4"></div><div class="a" style="left:1071px;top:219px;width:4px;height:1.3px;background:#569cd6"></div><div class="a" style="left:1060px;top:223px;width:6px;height:1.3px;background:#4fc1ff"></div><div class="a" style="left:1067px;top:223px;width:1px;height:1.3px;background:#d4d4d4"></div><div class="a" style="left:1069px;top:223px;width:4px;height:1.3px;background:#569cd6"></div><div class="a" style="left:1060px;top:229px;width:1px;height:1.3px;background:#6a9955"></div><div class="a" style="left:1062px;top:229px;width:6px;height:1.3px;background:#6a9955"></div><div class="a" style="left:1069px;top:229px;width:5px;height:1.3px;background:#6a9955"></div><div class="a" style="left:1075px;top:229px;width:5px;height:1.3px;background:#6a9955"></div><div class="a" style="left:1081px;top:229px;width:11px;height:1.3px;background:#6a9955"></div><div class="a" style="left:1093px;top:229px;width:7px;height:1.3px;background:#6a9955"></div><div class="a" style="left:1060px;top:231px;width:1px;height:1.3px;background:#6a9955"></div><div class="a" style="left:1062px;top:231px;width:57px;height:1.3px;background:#6a9955"></div><div class="a" style="left:1060px;top:235px;width:10px;height:1.3px;background:#4fc1ff"></div><div class="a" style="left:1071px;top:235px;width:1px;height:1.3px;background:#d4d4d4"></div><div class="a" style="left:1073px;top:235px;width:9px;height:1.3px;background:#ce9178"></div><div class="a" style="left:1060px;top:239px;width:1px;height:1.3px;background:#6a9955"></div><div class="a" style="left:1062px;top:239px;width:7px;height:1.3px;background:#6a9955"></div><div class="a" style="left:1070px;top:239px;width:7px;height:1.3px;background:#6a9955"></div><div class="a" style="left:1078px;top:239px;width:3px;height:1.3px;background:#6a9955"></div><div class="a" style="left:1082px;top:239px;width:5px;height:1.3px;background:#6a9955"></div><div class="a" style="left:1088px;top:239px;width:4px;height:1.3px;background:#6a9955"></div><div class="a" style="left:1060px;top:241px;width:1px;height:1.3px;background:#6a9955"></div><div class="a" style="left:1062px;top:241px;width:70px;height:1.3px;background:#6a9955"></div><div class="a" style="left:1060px;top:245px;width:18px;height:1.3px;background:#4fc1ff"></div><div class="a" style="left:1079px;top:245px;width:1px;height:1.3px;background:#d4d4d4"></div><div class="a" style="left:1081px;top:245px;width:31px;height:1.3px;background:#ce9178"></div></div><div class="a" style="left:1060px;top:93px;width:113px;height:2px;background:#4a4a4a"></div><div class="a" style="left:1175px;top:113.54999999999998px;width:13px;height:135.89999999999998px;background:rgba(121,121,121,0.32)"></div><div class="a" style="left:1173px;top:206.375px;width:15px;height:2px;background:#a8a8a8"></div><div class="a" style="left:0;top:0;width:1188px;height:3px;background:#1e1e1e"></div><div class="a" style="left:0;top:3px;width:1060px;height:6px;background:linear-gradient(#000000dd,#00000000)"></div></div>
<div id="panel" class="a"><div class="pt" style="left:20px;color:#9a9a9a">PROBLEMS</div><div class="pt" style="left:104px;color:#9a9a9a">OUTPUT</div><div class="pt" style="left:174px;color:#e7e7e7">TERMINAL</div><div class="pt" style="left:253px;color:#9a9a9a">DEBUG CONSOLE</div><div class="a" style="left:174px;top:28px;width:57px;height:1.5px;background:#e7e7e7"></div><div class="term" style="top:47.2px">(base) ankit_home@ankits-MacBook-Air 23_june_2022 % django-admin startproject ankit</div><div class="term" style="top:61.2px">(base) ankit_home@ankits-MacBook-Air 23_june_2022 % </div><div class="a" style="left:383px;top:61.2px;width:8px;height:14px;border:1.5px solid #cccccc"></div><svg class="a" style="left:999px;top:9.5px" width="16" height="16" viewBox="0 0 16 16" fill="none" stroke="#c5c5c5" stroke-width="1.3" stroke-linejoin="round"><rect x="2" y="2" width="12" height="12" rx="1"/><path d="M6 5.5l2.5 2.5L6 10.5"/></svg><div class="pt" style="left:1019px;color:#cccccc;font-size:12px">zsh</div><svg class="a" style="left:1047px;top:9.5px" width="16" height="16" viewBox="0 0 16 16" fill="none" stroke="#c5c5c5" stroke-width="1.5" stroke-linejoin="round"><path d="M8 2v12M2 8h12"/></svg><svg class="a" style="left:1063px;top:9.5px" width="16" height="16" viewBox="0 0 16 16" fill="none" stroke="#c5c5c5" stroke-width="1.1" stroke-linejoin="round"><path d="M5 6.5l3 3 3-3"/></svg><svg class="a" style="left:1088px;top:9.5px" width="16" height="16" viewBox="0 0 16 16" fill="none" stroke="#c5c5c5" stroke-width="1.3" stroke-linejoin="round"><rect x="2" y="2" width="12" height="12" rx="1"/><path d="M8 2v12"/></svg><svg class="a" style="left:1112px;top:9.5px" width="16" height="16" viewBox="0 0 16 16" fill="none" stroke="#c5c5c5" stroke-width="1.3" stroke-linejoin="round"><path d="M3 4h10M6 4V2.5h4V4M4.5 4l.7 10h5.6l.7-10" fill="#c5c5c5"/></svg><svg class="a" style="left:1139px;top:9.5px" width="16" height="16" viewBox="0 0 16 16" fill="none" stroke="#c5c5c5" stroke-width="1.3" stroke-linejoin="round"><path d="M3.5 10l4.5-4.5 4.5 4.5"/></svg><svg class="a" style="left:1160px;top:9.5px" width="16" height="16" viewBox="0 0 16 16" fill="none" stroke="#c5c5c5" stroke-width="1.3" stroke-linejoin="round"><path d="M4 4l8 8M12 4l-8 8"/></svg></div>
<div id="status" class="a"><svg class="a" style="left:13px;top:3px" width="16" height="16" viewBox="0 0 16 16" fill="none" stroke="#fff" stroke-width="1.2"><circle cx="8" cy="8" r="6"/><path d="M5.8 5.8l4.4 4.4M10.2 5.8l-4.4 4.4"/></svg><span class="a" style="left:31px;top:0">0</span><svg class="a" style="left:43px;top:3px" width="16" height="16" viewBox="0 0 16 16" fill="none" stroke="#fff" stroke-width="1.2" stroke-linejoin="round"><path d="M8 2L14.5 13.5h-13z"/><path d="M8 6.5v3.5M8 11.5v.8"/></svg><span class="a" style="left:62px;top:0">0</span><span class="a" style="left:842px;top:0">Ln 47, Col 63 (26 selected)</span><span class="a" style="left:1011px;top:0">Spaces: 4</span><span class="a" style="left:1084px;top:0">UTF-8</span><span class="a" style="left:1136px;top:0">LF</span><span class="a" style="left:1165px;top:0">Python</span><span class="a" style="left:1222px;top:0">3.9.6 64-bit</span><span class="a" style="left:1322px;top:0">Go Live</span><svg class="a" style="left:1303px;top:3px" width="16" height="16" viewBox="0 0 16 16" fill="none" stroke="#fff" stroke-width="1.5"><circle cx="8" cy="6.5" r="4.8"/><circle cx="8" cy="6.5" r="1.8" fill="#fff" stroke="none"/><path d="M8 8v6.5"/></svg><svg class="a" style="left:1379px;top:3px" width="16" height="16" viewBox="0 0 16 16" fill="none" stroke="#fff" stroke-width="1.5" stroke-linejoin="round" stroke-linecap="round"><path d="M3 14.5l3-12h6a3 3 0 0 1 0 6H7.5l4.5 6M2 2.5h3"/></svg><svg class="a" style="left:1409px;top:3px" width="16" height="16" viewBox="0 0 16 16" fill="none" stroke="#fff" stroke-width="1.5" stroke-linejoin="round"><path d="M4 11V7a4 4 0 018 0v4l1.5 1.5h-11z"/><path d="M6.5 14.5h3"/></svg></div>
</div>
</body></html>
